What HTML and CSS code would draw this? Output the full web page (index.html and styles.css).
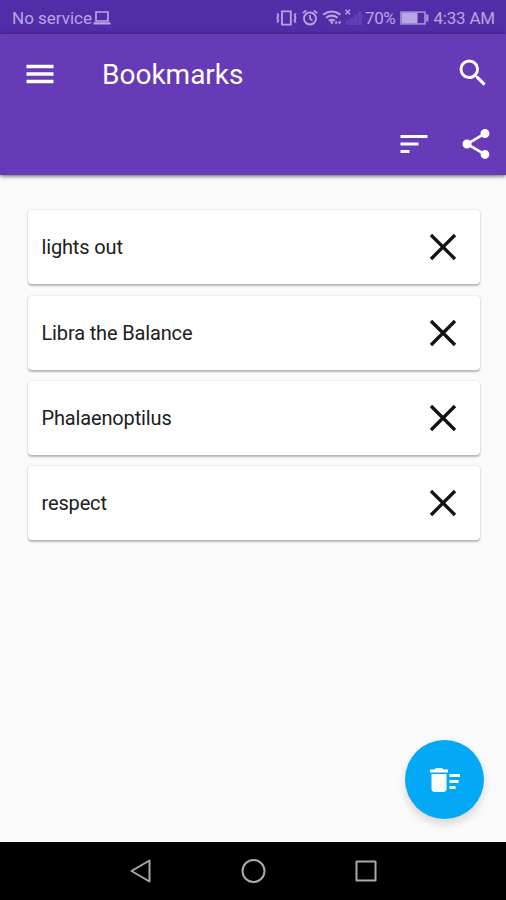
FILE: index.html
```html
<!DOCTYPE html>
<html lang="en">
<head>
<meta charset="utf-8">
<title>Bookmarks</title>
<link rel="stylesheet" href="styles.css">
</head>
<body>
<div class="status">
  <span class="carrier">No service</span>
  <svg class="laptop" width="18" height="16" viewBox="0 0 18 16"><path d="M3 2h12v9H3z" fill="none" stroke="currentColor" stroke-width="1.7"/><path d="M0.5 12.2h17v2.3h-17z" fill="currentColor"/></svg>
  <svg class="indicators" width="88" height="20" viewBox="0 0 88 20">
    <g fill="none" stroke="currentColor" stroke-width="1.8">
      <path d="M6 3.400h8.800v13.200H6z"/>
      <path d="M1.300 5.300l1 2.400-1 2.300 1 2.300-1 2.400M19.600 5.300l-1 2.400 1 2.300-1 2.300 1 2.400" stroke-width="1.800"/>
      <circle cx="34" cy="10.500" r="6"/>
      <path d="M34 7v3.800l2.500 1.800M26.800 5.200l3.400-2.700M41.200 5.200l-3.400-2.700" stroke-width="1.700"/>
      <path d="M47.200 6.600q8.600-6.200 17.200 0M50 9.800q5.800-4.400 11.600 0M52.800 12.800q3-2.200 6 0" stroke-width="2"/>
      <path d="M69.500 1.800l4.500 4.500M74 1.800l-4.500 4.500" stroke-width="1.500"/>
    </g>
    <path d="M54 14l1.800-1.200 1.800 1.200-1.800 2.500zM58.500 15.500l1.700-2.700 1.700 2.700zM62 13.500h3.400l-1.700 3z" fill="currentColor"/>
    <path d="M70 17v-5h3.500v5zM74 17v-7h3.500v7zM78 17V6.500h3.500V17zM82 17V3.500h4V17z" fill="#6440b4"/>
  </svg>
  <span class="percent">70%</span>
  <svg class="battery" width="30" height="16" viewBox="0 0 30 16"><path d="M1 2.200h24v11.600H1z" fill="none" stroke="currentColor" stroke-width="1.800" opacity=".75"/><path d="M2 3h15.500v10H2z" fill="currentColor"/><path d="M26 4.500h2.500v7H26z" fill="currentColor" opacity=".8"/></svg>
  <span class="clock">4:33 AM</span>
</div>
<header class="appbar">
  <div class="row">
    <svg class="icon menu" viewBox="0 0 24 24"><path d="M3 18.100h18v-2.200H3v2.200zm0-5h18v-2.200H3v2.200zm0-7.200v2.200h18V5.900H3z"/></svg>
    <h1>Bookmarks</h1>
    <svg class="icon search" viewBox="0 0 24 24"><path d="M15.500 14h-.79l-.28-.27A6.470 6.470 0 0 0 16 9.500 6.500 6.500 0 1 0 9.500 16c1.610 0 3.090-.59 4.230-1.570l.27.28v.79l5 4.990L20.490 19l-4.990-5zm-6 0C7.010 14 5 11.990 5 9.500S7.010 5 9.500 5 14 7.010 14 9.500 11.990 14 9.500 14z"/></svg>
  </div>
  <div class="row tools">
    <svg class="icon" viewBox="0 0 24 24"><path d="M3 18h6v-2H3v2zM3 6v2h18V6H3zm0 7h12v-2H3v2z"/></svg>
    <svg class="icon" viewBox="0 0 24 24"><path d="M18 16.080c-.76 0-1.440.3-1.960.77L8.910 12.700c.05-.23.09-.46.09-.7s-.04-.47-.09-.7l7.050-4.110c.54.5 1.250.81 2.040.81 1.660 0 3-1.340 3-3s-1.340-3-3-3-3 1.340-3 3c0 .24.04.47.09.7L8.040 9.810C7.500 9.310 6.790 9 6 9c-1.660 0-3 1.340-3 3s1.340 3 3 3c.79 0 1.500-.31 2.040-.81l7.120 4.160c-.05.21-.08.43-.08.650 0 1.610 1.310 2.920 2.920 2.920s2.920-1.310 2.920-2.920-1.310-2.920-2.920-2.920z"/></svg>
  </div>
</header>
<main>
  <ul class="list">
    <li class="card"><span>lights out</span><svg class="close" viewBox="0 0 28 28"><path d="M2 2l24 24M26 2L2 26"/></svg></li>
    <li class="card"><span>Libra the Balance</span><svg class="close" viewBox="0 0 28 28"><path d="M2 2l24 24M26 2L2 26"/></svg></li>
    <li class="card"><span>Phalaenoptilus</span><svg class="close" viewBox="0 0 28 28"><path d="M2 2l24 24M26 2L2 26"/></svg></li>
    <li class="card"><span>respect</span><svg class="close" viewBox="0 0 28 28"><path d="M2 2l24 24M26 2L2 26"/></svg></li>
  </ul>
  <div class="fab"><svg class="icon" viewBox="0 0 24 24"><path d="M15 16h4v2h-4zm0-8h7v2h-7zm0 4h6v2h-6zM3 18c0 1.100.9 2 2 2h6c1.100 0 2-.9 2-2V8H3v10zM14 5h-3l-1-1H6L5 5H2v2h12z"/></svg></div>
</main>
<nav class="navbar">
  <svg viewBox="0 0 26 26"><path d="M3.500 13L21.500 2.500v21z"/></svg>
  <svg viewBox="0 0 26 26"><circle cx="13.500" cy="13" r="11"/></svg>
  <svg viewBox="0 0 26 26"><path d="M3.500 3.500h19v19h-19z"/></svg>
</nav>
</body>
</html>
```
FILE: styles.css
```css
* { box-sizing: border-box; }
body {
  margin: 0;
  width: 506px;
  height: 900px;
  display: flex;
  flex-direction: column;
  overflow: hidden;
  background: #fafafa;
  font-family: Roboto, sans-serif;
}
svg { display: block; flex: none; }
.status {
  height: 34px;
  padding: 2px 11px 0 12px;
  display: flex;
  align-items: center;
  background: #512da8;
  color: #b9a5e3;
  font-size: 17px;
  line-height: 20px;
  white-space: nowrap;
}
.carrier { width: 80px; }
.laptop { margin-left: 1px; }
.indicators { margin-left: 165px; }
.percent { margin-left: 1px; width: 32px; font-size: 17px; letter-spacing: -0.4px; }
.battery { margin-left: 3px; }
.clock { margin-left: auto; letter-spacing: -0.2px; }
.appbar {
  height: 141px;
  background: #673ab7;
  color: #fff;
  box-shadow: 0 1px 4px rgba(0, 0, 0, .65);
  position: relative;
}
.row { display: flex; align-items: center; height: 78px; padding: 0 15px 0 22px; }
.icon { width: 36px; height: 36px; fill: #fff; }
.menu { margin-top: 1px; }
h1 { margin: 4px 0 0 44px; font-size: 28px; line-height: 34px; font-weight: 400; }
.search { margin-left: auto; }
.tools { height: 64px; justify-content: flex-end; gap: 26px; padding: 0 12px 0 0; }
main { flex: 1; position: relative; padding: 35.200px 26.500px 0 27.500px; }
.list { list-style: none; margin: 0; padding: 0; display: grid; gap: 11.350px; }
.card {
  height: 74px;
  display: flex;
  align-items: center;
  justify-content: space-between;
  padding: 0 23px 0 14px;
  background: #fff;
  border-radius: 4px;
  box-shadow: 0 1.500px 2px rgba(0, 0, 0, .26), 0 0 2px rgba(0, 0, 0, .12);
  color: #202020;
  font-size: 20px;
  letter-spacing: -0.15px;
}
.close { width: 28px; height: 28px; fill: none; stroke: #111; stroke-width: 3.300; }
.fab {
  position: absolute;
  right: 22px;
  bottom: 23px;
  width: 79px;
  height: 79px;
  border-radius: 50%;
  display: grid;
  place-items: center;
  background: #03a9f4;
  box-shadow: 0 5px 9px rgba(0, 0, 0, .14);
}
.navbar {
  height: 58px;
  background: #000;
  display: flex;
  justify-content: center;
  align-items: center;
  gap: 86.500px;
}
.navbar svg { width: 26px; height: 26px; fill: none; stroke: #aaa; stroke-width: 2; stroke-linejoin: round; }
```
